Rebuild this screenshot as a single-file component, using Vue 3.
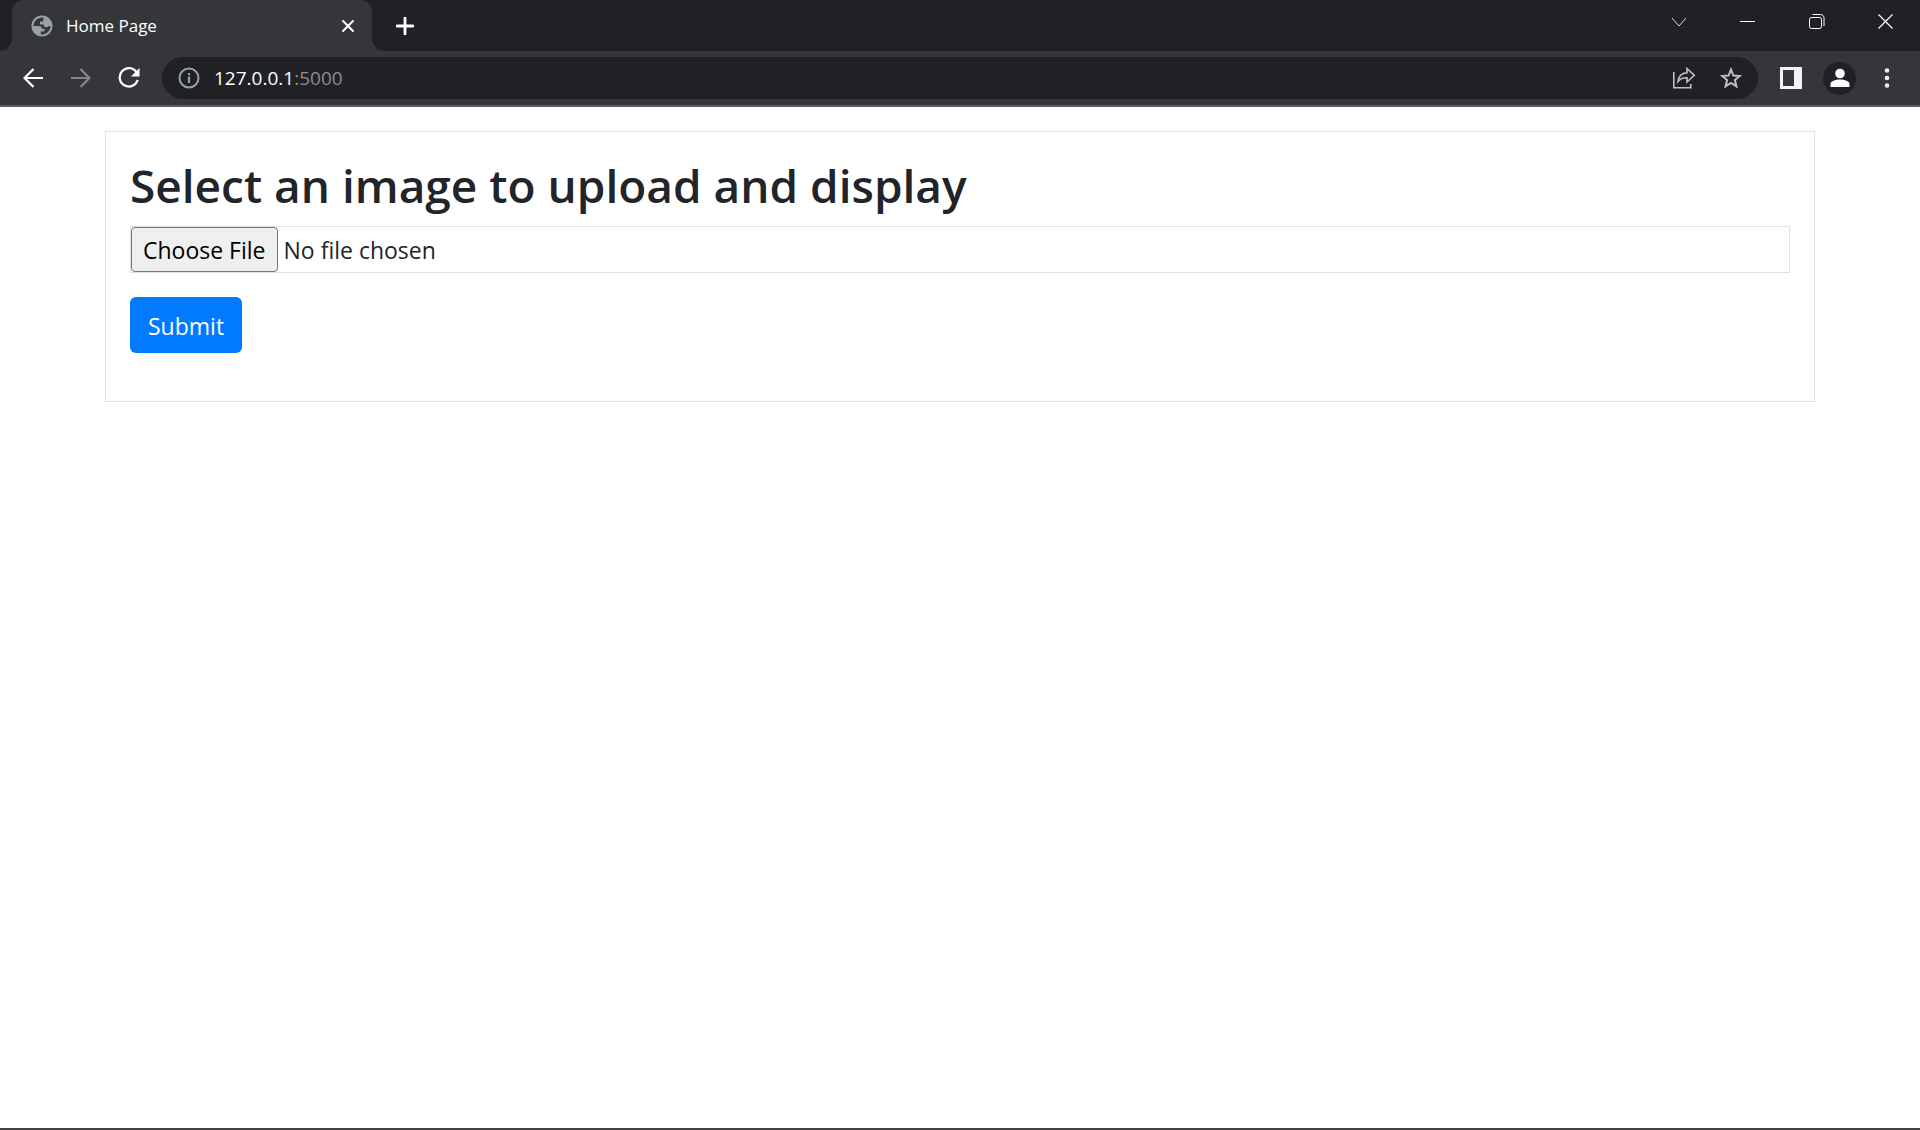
<script setup>
import { ref } from 'vue'

const address = ref({ host: '127.0.0.1', port: ':5000' })
</script>

<template>
  <div class="window">
    <header class="chrome">
      <div class="tab-strip">
        <div class="tab">
          <svg class="favicon" viewBox="0 0 22 22" width="22" height="22" aria-hidden="true">
            <circle cx="11" cy="11" r="10.6" fill="#9aa0a6" />
            <path
              d="M12.3 2.6C7 2 2.6 6 2.5 10.9h5.2c2 0 3.2 1 3.2 2.8h2.6v2.8H9.8v2.9c5 .6 9.6-3.3 9.7-8.4h-1.7c-.6 1.1-1.3 1.3-2.8 1.3-1.6 0-2.3-1-2.3-2.7H9V6.5h3.3z"
              fill="#35363a"
            />
          </svg>
          <span class="tab-title">Home Page</span>
          <button class="icon-btn tab-close" type="button" aria-label="Close tab">
            <svg viewBox="0 0 14 14" width="14" height="14">
              <path d="M2 2l10 10M12 2L2 12" stroke="#fff" stroke-width="2" stroke-linecap="round" />
            </svg>
          </button>
        </div>
        <button class="icon-btn new-tab" type="button" aria-label="New tab">
          <svg viewBox="0 0 18 18" width="18" height="18">
            <path d="M9 1v16M1 9h16" stroke="#fff" stroke-width="2.8" stroke-linecap="round" />
          </svg>
        </button>
        <div class="window-controls">
          <button class="icon-btn control" type="button" aria-label="Search tabs">
            <svg viewBox="0 0 16 16" width="16" height="16">
              <path d="M1 4l7 8 7-8" fill="none" stroke="#dadce0" />
            </svg>
          </button>
          <button class="icon-btn control" type="button" aria-label="Minimize">
            <svg viewBox="0 0 16 16" width="16" height="16">
              <path d="M0 7.5h15" stroke="#fff" />
            </svg>
          </button>
          <button class="icon-btn control" type="button" aria-label="Restore">
            <svg viewBox="0 0 16 16" width="16" height="16" fill="none" stroke="#fff">
              <rect x=".5" y="3.5" width="12" height="11" rx="2" />
              <path d="M3.5 .5h8c2 0 3.500 1.500 3.500 3.500v8" />
            </svg>
          </button>
          <button class="icon-btn control" type="button" aria-label="Close">
            <svg viewBox="0 0 16 16" width="16" height="16">
              <path d="M.5.5l14 14M14.500.5l-14 14" stroke="#fff" stroke-width="1.2" />
            </svg>
          </button>
        </div>
      </div>

      <div class="toolbar">
        <button class="icon-btn nav" type="button" aria-label="Back">
          <svg viewBox="0 0 20 20" width="20" height="20">
            <path d="M20 10H2M10.500 1L1.500 10l9 9" fill="none" stroke="#fff" stroke-width="2.2" />
          </svg>
        </button>
        <button class="icon-btn nav" type="button" aria-label="Forward" disabled>
          <svg viewBox="0 0 20 20" width="20" height="20">
            <path d="M0 10h18M9.500 1l9 9-9 9" fill="none" stroke="#86878a" stroke-width="2.2" />
          </svg>
        </button>
        <button class="icon-btn nav" type="button" aria-label="Reload">
          <svg viewBox="0 0 22 22" width="22" height="22">
            <path d="M18.600 5.300A9.200 9.200 0 1 0 19.700 13" fill="none" stroke="#fff" stroke-width="2.3" />
            <path d="M21.500 1v8.500H13z" fill="#fff" />
          </svg>
        </button>
        <div class="omnibox">
          <button class="icon-btn" type="button" aria-label="View site information">
            <svg viewBox="0 0 22 22" width="22" height="22">
              <circle cx="11" cy="11" r="9.5" fill="none" stroke="#9aa0a6" stroke-width="2" />
              <path d="M11 9.500v6.500M11 6v2.200" stroke="#9aa0a6" stroke-width="2.2" />
            </svg>
          </button>
          <span class="url">{{ address.host }}<span class="port">{{ address.port }}</span></span>
          <button class="icon-btn" type="button" aria-label="Share this page">
            <svg viewBox="0 0 24 24" width="24" height="24" fill="none" stroke="#bdc1c6" stroke-width="1.6">
              <path d="M1.800 6v15.700h17V18" />
              <path d="M6 15.500c.6-5.500 4-8.300 9-8.700V2.500l7.300 6.800-7.300 6.700v-4.200c-4-.1-6.800 1-9 3.700z" />
            </svg>
          </button>
          <button class="icon-btn star" type="button" aria-label="Bookmark this tab">
            <svg viewBox="0 0 22 22" width="22" height="22">
              <path
                d="M11 2.500l2.400 6 6.400.5-4.900 4.100 1.500 6.300L11 16l-5.400 3.400 1.500-6.300L2.200 9l6.400-.5z"
                fill="none"
                stroke="#bdc1c6"
                stroke-width="2"
              />
            </svg>
          </button>
        </div>
        <button class="icon-btn side-panel" type="button" aria-label="Side panel">
          <svg viewBox="0 0 22 22" width="22" height="22">
            <path d="M0 0h22v22H0zM3 3v16h11V3z" fill="#f1f3f4" fill-rule="evenodd" />
          </svg>
        </button>
        <button class="icon-btn profile" type="button" aria-label="Profile">
          <svg viewBox="0 0 20 20" width="20" height="20" fill="#fff">
            <circle cx="10" cy="5.5" r="4.8" />
            <path d="M.5 19v-3c0-3 5-4.500 9.500-4.500s9.500 1.500 9.500 4.500v3z" />
          </svg>
        </button>
        <button class="icon-btn menu" type="button" aria-label="Menu">
          <svg viewBox="0 0 6 20" width="6" height="20" fill="#f1f3f4">
            <circle cx="3" cy="2.5" r="2.3" />
            <circle cx="3" cy="10" r="2.3" />
            <circle cx="3" cy="17.5" r="2.3" />
          </svg>
        </button>
      </div>
    </header>

    <main class="page">
      <form class="card" @submit.prevent>
        <h1 class="title"><label for="image-file">Select an image to upload and display</label></h1>
        <input id="image-file" class="file" type="file" name="file" accept="image/*" />
        <button class="submit" type="submit">Submit</button>
      </form>
    </main>
  </div>
</template>

<style>
body {
  margin: 0;
  background: #fff;
}
</style>

<style scoped>
.window {
  box-sizing: border-box;
  display: flex;
  flex-direction: column;
  min-height: 100vh;
  border-bottom: 2px solid #444246;
  font-family: "Segoe UI", "Open Sans", "Noto Sans", sans-serif;
}

.icon-btn {
  display: flex;
  flex: none;
  align-items: center;
  justify-content: center;
  padding: 0;
  border: 0;
  background: none;
}

.chrome {
  border-bottom: 2px solid #5c5a60;
  background: #35363a;
}

.tab-strip {
  display: flex;
  height: 51px;
  background: #202124;
}

.tab {
  position: relative;
  box-sizing: border-box;
  display: flex;
  align-items: center;
  width: 360px;
  margin-left: 12px;
  padding: 0 17px 0 19px;
  border-radius: 12px 12px 0 0;
  background: #35363a;
}

.tab::before,
.tab::after {
  content: "";
  position: absolute;
  bottom: 0;
  width: 12px;
  height: 12px;
}

.tab::before {
  right: 100%;
  background: radial-gradient(circle at 0 0, transparent 12px, #35363a 12px);
}

.tab::after {
  left: 100%;
  background: radial-gradient(circle at 100% 0, transparent 12px, #35363a 12px);
}

.tab-title {
  flex: 1;
  margin-left: 13px;
  color: #fff;
  font-size: 17px;
}

.new-tab {
  width: 66px;
}

.window-controls {
  display: flex;
  height: 44px;
  margin-left: auto;
}

.control {
  width: 69px;
}

.toolbar {
  display: flex;
  align-items: center;
  height: 54px;
  padding-left: 9px;
}

.nav {
  width: 48px;
  height: 42px;
}

.omnibox {
  display: flex;
  flex: 1;
  align-items: center;
  height: 42px;
  margin-left: 9px;
  padding: 0 16px;
  border-radius: 21px;
  background: #202124;
}

.url {
  flex: 1;
  margin-left: 14px;
  color: #fff;
  font-size: 19px;
}

.port {
  color: #8b8d91;
}

.star {
  margin-left: 24px;
}

.side-panel {
  margin-left: 22px;
}

.profile {
  width: 33px;
  height: 33px;
  margin-left: 21px;
  border-radius: 50%;
  background: #202124;
}

.menu {
  margin: 0 30px 0 28px;
}

.page {
  flex: 1;
  padding: 24px;
}

.card {
  box-sizing: border-box;
  max-width: 1710px;
  margin: 0 auto;
  padding: 24px 24px 48px;
  border: 1px solid #dee2e6;
  color: #212529;
}

.title {
  margin: 0 0 12px;
  font-size: 46px;
  font-weight: 600;
  line-height: 58px;
}

.file {
  box-sizing: border-box;
  display: block;
  width: 100%;
  height: 47px;
  border: 1px solid #dee2e6;
  color: #212529;
  font-family: inherit;
  font-size: 23px;
  line-height: 36px;
}

.file::file-selector-button {
  box-sizing: border-box;
  height: 45px;
  margin-right: 6px;
  padding: 0 11px;
  border: 1px solid #767676;
  border-radius: 4px;
  background: #efefef;
  color: #000;
  font: inherit;
}

.submit {
  display: block;
  height: 56px;
  margin-top: 24px;
  padding: 2px 18px 0;
  border: 0;
  border-radius: 6px;
  background: #007bff;
  color: #fff;
  font-family: inherit;
  font-size: 23px;
}
</style>
